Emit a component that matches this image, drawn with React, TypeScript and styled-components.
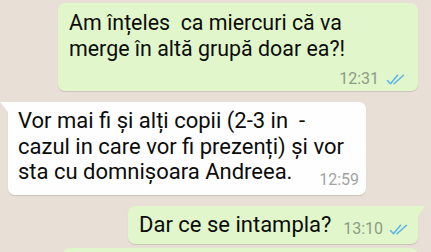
import { createGlobalStyle, styled } from 'styled-components';

const GlobalStyle = createGlobalStyle`
  html, body {
    margin: 0;
    padding: 0;
    background: #e8e0d6;
  }
  * {
    box-sizing: border-box;
  }
`;

const Ticks = () => (
  <TickSvg viewBox="0 0 19 11" width="19" height="11">
    <path d="M1.5 6.5 L4.5 9.8 L11.5 1.2" fill="none" stroke="#58b4e8" strokeWidth="1.5" strokeLinecap="round" strokeLinejoin="round" />
    <path d="M8 9.8 L17.5 1.2" fill="none" stroke="#58b4e8" strokeWidth="1.5" strokeLinecap="round" />
  </TickSvg>
);

const App = () => {
  return (
    <>
      <GlobalStyle />
      <Chat>
        <Bubble $out $width={360} $gap={3} $pad="7px 13px 2px 11px">
          <Text $size={21.4}>
            Am înțeles&nbsp; ca miercuri că va
            <br />
            merge în altă grupă doar ea?!
          </Text>
          <MetaRow $pull={8}>
            <Time $out>12:31</Time>
            <Ticks />
          </MetaRow>
        </Bubble>

        <Bubble $width={358} $gap={11} $tail $pad="6px 7px 5px 10px">
          <Text>
            Vor mai fi și alți copii (2-3 in&nbsp; -
            <br />
            cazul in care vor fi prezenți) și vor
            <br />
            sta cu domnișoara Andreea.
          </Text>
          <MetaRow $pull={-15}>
            <Time>12:59</Time>
          </MetaRow>
        </Bubble>

        <Bubble $out $width={290} $gap={11} $tail $pad="6px 10px 7px 11px">
          <InlineBody>
            <Text>Dar ce se intampla?</Text>
            <Meta>
              <Time $out>13:10</Time>
              <Ticks />
            </Meta>
          </InlineBody>
        </Bubble>

        <Bubble $out $width={355} $gap={4} $pad="6px 10px 7px 11px">
          <Text>&nbsp;</Text>
        </Bubble>
      </Chat>
    </>
  );
};

export default App;

const Chat = styled.div`
  display: flex;
  flex-direction: column;
  width: 431px;
  height: 252px;
  overflow: hidden;
  background: #e8e0d6;
  font-family: Roboto, 'Liberation Sans', Arial, sans-serif;
`;

const Bubble = styled.div<{ $out?: boolean; $width: number; $gap: number; $tail?: boolean; $pad: string }>`
  position: relative;
  flex-shrink: 0;
  width: ${(p) => p.$width}px;
  margin-top: ${(p) => p.$gap}px;
  align-self: ${(p) => (p.$out ? 'flex-end' : 'flex-start')};
  margin-left: ${(p) => (p.$out ? 0 : 8)}px;
  margin-right: ${(p) => (p.$out ? 13 : 0)}px;
  padding: ${(p) => p.$pad};
  background: ${(p) => (p.$out ? '#e1f7cb' : '#fefefe')};
  border-radius: 7px;
  border-top-left-radius: ${(p) => (p.$tail && !p.$out ? 0 : 7)}px;
  border-top-right-radius: ${(p) => (p.$tail && p.$out ? 0 : 7)}px;
  box-shadow: 0 1px 1px rgba(0, 0, 0, 0.13);

  &::before {
    content: '';
    display: ${(p) => (p.$tail ? 'block' : 'none')};
    position: absolute;
    top: 0;
    ${(p) => (p.$out ? 'right: -7px;' : 'left: -8px;')}
    width: 0;
    height: 0;
    border-top: 10px solid ${(p) => (p.$out ? '#e1f7cb' : '#fefefe')};
    ${(p) => (p.$out ? 'border-right: 7px solid transparent;' : 'border-left: 8px solid transparent;')}
  }
`;

const Text = styled.div<{ $size?: number }>`
  font-size: ${(p) => p.$size ?? 22}px;
  line-height: 25.5px;
  color: #0c0c0c;
  white-space: nowrap;
`;

const InlineBody = styled.div`
  display: flex;
  align-items: flex-end;
  justify-content: space-between;
  gap: 10px;
`;

const MetaRow = styled.div<{ $pull: number }>`
  display: flex;
  justify-content: flex-end;
  align-items: center;
  gap: 7px;
  margin-top: ${(p) => p.$pull}px;
`;

const Meta = styled.div`
  display: flex;
  align-items: center;
  gap: 6px;
  margin-bottom: -2px;
`;

const Time = styled.span<{ $out?: boolean }>`
  font-size: 16px;
  line-height: 20px;
  color: ${(p) => (p.$out ? '#8d9b87' : '#a3a3a3')};
`;

const TickSvg = styled.svg`
  display: block;
  flex-shrink: 0;
`;
